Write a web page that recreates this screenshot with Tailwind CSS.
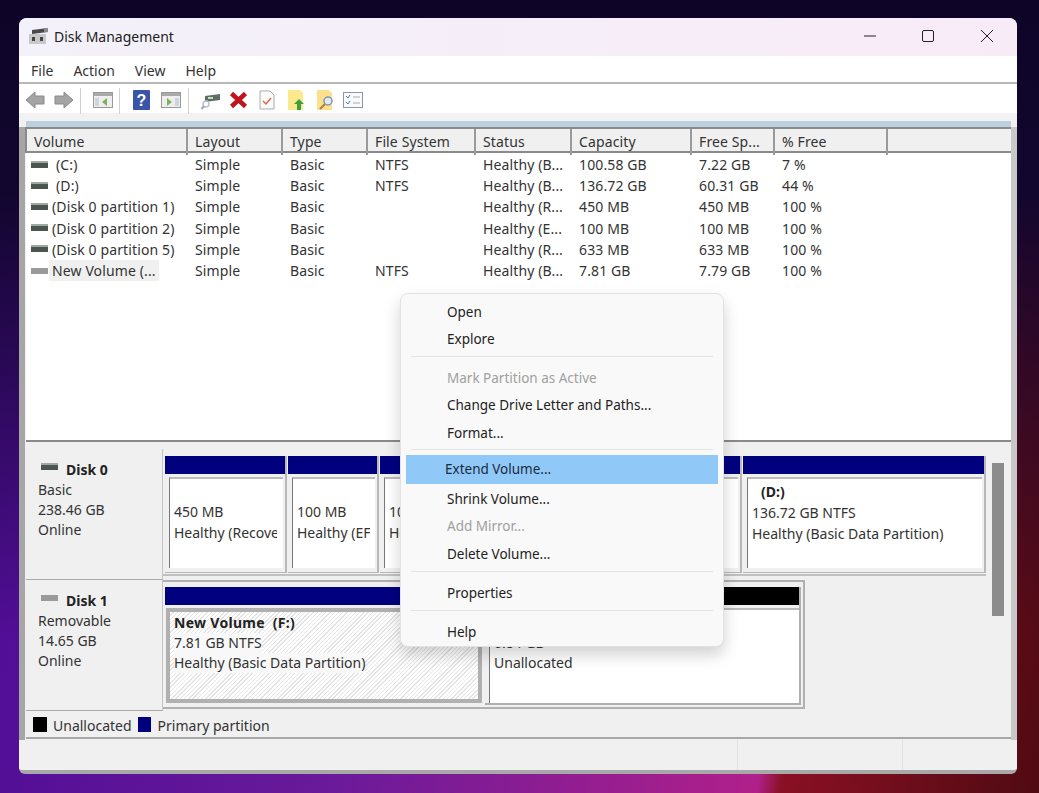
<!DOCTYPE html>
<html lang="en">
<head>
<meta charset="UTF-8">
<title>Disk Management</title>
<script src="https://cdn.jsdelivr.net/npm/@tailwindcss/browser@4"></script>
</head>
<body class="w-[1039px] h-[793px] overflow-hidden pt-[18px] pl-[19px] font-['Noto_Sans',sans-serif] text-[14px] text-[#333] bg-[linear-gradient(100deg,#4a0a96_0%,#6a1a9a_40%,#b0208a_76%,#8a1024_78%,#500a12_100%)]">
<div class="absolute inset-x-0 top-0 h-[640px] bg-[linear-gradient(180deg,#0e0428_0%,#12062e_30%,transparent_100%)]"></div>

<!-- Window -->
<div class="relative w-[998px] h-[756px] rounded-t-[8px] rounded-b-[6px] overflow-hidden bg-[#f0f0f0] border-b-[4px] border-[#a8a8a8] flex flex-col">

  <!-- Title bar -->
  <div class="h-[38px] shrink-0 flex items-center pb-[2px] bg-[linear-gradient(90deg,#f3f1f9,#f8ebf8)]">
    <svg class="ml-[10px] w-[20px] h-[18px]" viewBox="0 0 20 18">
      <path d="M3 3 L19 1 L19 5 L3 7 Z" fill="#4a4a4a"/>
      <rect x="15" y="1" width="4" height="4" fill="#8a8a8a"/>
      <rect x="0" y="7" width="17" height="10" fill="#c8c8c8"/>
      <rect x="3" y="10" width="3" height="4" fill="#444"/>
      <rect x="11" y="10" width="3" height="4" fill="#444"/>
    </svg>
    <span class="ml-[5px] text-[#222]">Disk Management</span>
    <div class="ml-auto flex items-center">
      <svg class="w-[14px] h-[14px] mr-[44px]" viewBox="0 0 14 14"><path d="M1 7 H13" stroke="#222" stroke-width="1"/></svg>
      <svg class="w-[14px] h-[14px] mr-[45px]" viewBox="0 0 14 14"><rect x="1.5" y="1.5" width="11" height="11" rx="1.5" fill="none" stroke="#222" stroke-width="1"/></svg>
      <svg class="w-[14px] h-[14px] mr-[23px]" viewBox="0 0 14 14"><path d="M1 1 L13 13 M13 1 L1 13" stroke="#222" stroke-width="1"/></svg>
    </div>
  </div>

  <!-- Menu bar -->
  <div class="h-[28px] shrink-0 bg-white border-b-[2px] border-[#b8b8b8] flex items-center pt-[2px] pl-[12px] gap-[20px] text-[#333]">
    <span>File</span><span>Action</span><span>View</span><span>Help</span>
  </div>

  <!-- Toolbar -->
  <div class="h-[37px] shrink-0 flex items-start pt-[6px] pl-[6px] bg-[linear-gradient(#fff_0,#fff_29px,#f2f2f2_29px)]">
    <svg class="w-[20px] h-[20px]" viewBox="0 0 20 20"><path d="M1 10 L10 2 V6 H19 V14 H10 V18 Z" fill="#a4a4a4" stroke="#8a8a8a"/></svg>
    <svg class="ml-[9px] w-[20px] h-[20px]" viewBox="0 0 20 20"><path d="M19 10 L10 2 V6 H1 V14 H10 V18 Z" fill="#a4a4a4" stroke="#8a8a8a"/></svg>
    <div class="ml-[6px] w-px h-[26px] -mt-[2px] bg-[#d0d0d0]"></div>
    <svg class="ml-[12px] mt-[1px] w-[20px] h-[18px]" viewBox="0 0 20 18"><rect x="0.5" y="1.5" width="19" height="15" fill="#eee" stroke="#999"/><rect x="1" y="2" width="18" height="3" fill="#aaa"/><rect x="2" y="7" width="4" height="8" fill="#cdd6dd"/><path d="M14 7 L9 11 L14 15 Z" fill="#7fb060"/></svg>
    <div class="ml-[6px] w-px h-[26px] -mt-[2px] bg-[#d0d0d0]"></div>
    <svg class="ml-[13px] w-[17px] h-[20px]" viewBox="0 0 17 20"><rect width="17" height="20" rx="1" fill="#3a55a8"/><text x="8.5" y="16" text-anchor="middle" font-size="16" font-weight="700" fill="#fff" font-family="Liberation Sans">?</text></svg>
    <svg class="ml-[11px] mt-[1px] w-[20px] h-[18px]" viewBox="0 0 20 18"><rect x="0.5" y="1.5" width="19" height="15" fill="#eee" stroke="#999"/><rect x="1" y="2" width="18" height="3" fill="#aaa"/><rect x="14" y="7" width="4" height="8" fill="#cdd6dd"/><path d="M6 7 L11 11 L6 15 Z" fill="#7fb060"/></svg>
    <div class="ml-[7px] w-px h-[26px] -mt-[2px] bg-[#d0d0d0]"></div>
    <svg class="ml-[12px] w-[20px] h-[20px]" viewBox="0 0 20 20"><path d="M4 6 L19 4 L19 10 L4 12 Z" fill="#5f6e66"/><rect x="7" y="7" width="5" height="2" fill="#bfe0c0"/><circle cx="5" cy="14" r="3" fill="none" stroke="#b8c4d0" stroke-width="1.5"/><path d="M3 16 L0.5 19" stroke="#9aa8b8" stroke-width="2"/></svg>
    <svg class="ml-[8px] mt-[1px] w-[19px] h-[18px]" viewBox="0 0 19 18"><path d="M2.5 2.5 L16.5 15.5 M16.5 2.5 L2.5 15.5" stroke="#c0141e" stroke-width="4.5"/></svg>
    <svg class="ml-[11px] w-[16px] h-[20px]" viewBox="0 0 16 20"><path d="M1 1 H11 L15 5 V19 H1 Z" fill="#fafafa" stroke="#aaa"/><path d="M4 11 L7 14 L12 8" stroke="#d8694a" stroke-width="1.5" fill="none"/></svg>
    <svg class="ml-[13px] w-[17px] h-[20px]" viewBox="0 0 17 20"><path d="M0 0 H12 L15 3 V20 H0 Z" fill="#fde98c"/><path d="M11 9 L16 14 H13 V20 H9 V14 H6 Z" fill="#3ca03c"/></svg>
    <svg class="ml-[12px] w-[18px] h-[20px]" viewBox="0 0 18 20"><path d="M0 0 H12 L15 3 V20 H0 Z" fill="#fde08c"/><circle cx="11" cy="11" r="4" fill="#dfeaf5" stroke="#7d97ad" stroke-width="1.5"/><path d="M8 14 L3 19" stroke="#a88040" stroke-width="2"/></svg>
    <svg class="ml-[8px] mt-[2px] w-[20px] h-[16px]" viewBox="0 0 20 16"><rect x="0.5" y="0.5" width="19" height="15" fill="#fafafa" stroke="#8a98a4"/><path d="M3 4 L5 6 L7 3 M3 10 L5 12 L7 9" stroke="#4a7ac0" fill="none"/><path d="M10 5 H17 M10 11 H17" stroke="#aaa"/></svg>
  </div>
  <div class="h-[6px] shrink-0 bg-[#bcd0e0] ml-[7px] mr-[6px]"></div>

  <!-- Client area -->
  <div class="flex-1 min-h-0 flex border-x-[6px] border-[#a6a6a6] border-r-[#c8c8c8] bg-[#f0f0f0]">
    <div class="flex-1 flex flex-col min-w-0 pl-px">

      <!-- Volume list -->
      <div class="h-[315px] shrink-0 flex flex-col border-b-[2px] border-[#8a8a8a] bg-white tracking-[0.12px]">
        <div class="h-[26px] shrink-0 grid grid-cols-[161px_95px_85px_108px_96px_120px_83px_113px] bg-[#f0f0f0] border-y-[2px] border-[#8a8a8a] border-l-[2px] border-l-[#8a8a8a] -ml-px leading-[26px]">
          <div class="h-full pl-[7px] border-r-[2px] border-[#9a9a9a]">Volume</div>
          <div class="h-full pl-[7px] border-r-[2px] border-[#9a9a9a]">Layout</div>
          <div class="h-full pl-[7px] border-r-[2px] border-[#9a9a9a]">Type</div>
          <div class="h-full pl-[7px] border-r-[2px] border-[#9a9a9a]">File System</div>
          <div class="h-full pl-[7px] border-r-[2px] border-[#9a9a9a]">Status</div>
          <div class="h-full pl-[7px] border-r-[2px] border-[#9a9a9a]">Capacity</div>
          <div class="h-full pl-[7px] border-r-[2px] border-[#9a9a9a]">Free Sp...</div>
          <div class="h-full pl-[7px] border-r-[2px] border-[#9a9a9a]">% Free</div>
        </div>
        <div class="pt-px leading-[21.2px] grid grid-cols-[161px_95px_85px_108px_96px_120px_83px_113px] auto-rows-[21.2px]">
          <div class="flex items-center pl-[5px]"><svg class="w-[17px] h-[8px] mr-[8px]" viewBox="0 0 17 8"><rect width="17" height="2" fill="#a0a8a4"/><rect y="2" width="17" height="5" fill="#4c5650"/></svg>(C:)</div>
          <div class="pl-[8px]">Simple</div><div class="pl-[8px]">Basic</div><div class="pl-[8px]">NTFS</div><div class="pl-[8px]">Healthy (B...</div><div class="pl-[8px]">100.58 GB</div><div class="pl-[8px]">7.22 GB</div><div class="pl-[8px]">7 %</div>
          <div class="flex items-center pl-[5px]"><svg class="w-[17px] h-[8px] mr-[8px]" viewBox="0 0 17 8"><rect width="17" height="2" fill="#a0a8a4"/><rect y="2" width="17" height="5" fill="#4c5650"/></svg>(D:)</div>
          <div class="pl-[8px]">Simple</div><div class="pl-[8px]">Basic</div><div class="pl-[8px]">NTFS</div><div class="pl-[8px]">Healthy (B...</div><div class="pl-[8px]">136.72 GB</div><div class="pl-[8px]">60.31 GB</div><div class="pl-[8px]">44 %</div>
          <div class="flex items-center pl-[5px]"><svg class="w-[17px] h-[8px] mr-[4px]" viewBox="0 0 17 8"><rect width="17" height="2" fill="#a0a8a4"/><rect y="2" width="17" height="5" fill="#4c5650"/></svg>(Disk 0 partition 1)</div>
          <div class="pl-[8px]">Simple</div><div class="pl-[8px]">Basic</div><div></div><div class="pl-[8px]">Healthy (R...</div><div class="pl-[8px]">450 MB</div><div class="pl-[8px]">450 MB</div><div class="pl-[8px]">100 %</div>
          <div class="flex items-center pl-[5px]"><svg class="w-[17px] h-[8px] mr-[4px]" viewBox="0 0 17 8"><rect width="17" height="2" fill="#a0a8a4"/><rect y="2" width="17" height="5" fill="#4c5650"/></svg>(Disk 0 partition 2)</div>
          <div class="pl-[8px]">Simple</div><div class="pl-[8px]">Basic</div><div></div><div class="pl-[8px]">Healthy (E...</div><div class="pl-[8px]">100 MB</div><div class="pl-[8px]">100 MB</div><div class="pl-[8px]">100 %</div>
          <div class="flex items-center pl-[5px]"><svg class="w-[17px] h-[8px] mr-[4px]" viewBox="0 0 17 8"><rect width="17" height="2" fill="#a0a8a4"/><rect y="2" width="17" height="5" fill="#4c5650"/></svg>(Disk 0 partition 5)</div>
          <div class="pl-[8px]">Simple</div><div class="pl-[8px]">Basic</div><div></div><div class="pl-[8px]">Healthy (R...</div><div class="pl-[8px]">633 MB</div><div class="pl-[8px]">633 MB</div><div class="pl-[8px]">100 %</div>
          <div class="flex items-center pl-[5px]"><svg class="w-[17px] h-[8px] mr-[1px]" viewBox="0 0 17 8"><rect y="1" width="17" height="6" fill="#9a9a9a"/></svg><span class="pl-[3px] w-[110px] bg-[#f0f0f0]">New Volume (...</span></div>
          <div class="pl-[8px]">Simple</div><div class="pl-[8px]">Basic</div><div class="pl-[8px]">NTFS</div><div class="pl-[8px]">Healthy (B...</div><div class="pl-[8px]">7.81 GB</div><div class="pl-[8px]">7.79 GB</div><div class="pl-[8px]">100 %</div>
        </div>
      </div>

      <!-- Graphical view -->
      <div class="flex-1 min-h-0 flex flex-col pt-[7px] leading-[20px]">
        <div class="flex h-[131px] shrink-0">
          <div class="w-[137px] shrink-0 bg-[#f0f0f0] border-r-[1px] border-[#c4c4c4] border-b-[1px] border-b-[#aaa] pl-[12px] pt-[10px]">
            <div class="h-[21px] flex items-center gap-[8px] font-bold text-[#222]"><svg class="ml-[3px] -mt-[5px] w-[17px] h-[8px]" viewBox="0 0 17 8"><rect width="17" height="2" fill="#a0a8a4"/><rect y="2" width="17" height="5" fill="#4c5650"/></svg>Disk 0</div>
            <div>Basic</div><div>238.46 GB</div><div>Online</div>
          </div>
          <div class="w-[823px] flex gap-px pl-[2px] pt-[7px] h-[127px] border-b-[2px] border-[#c0c0c0] leading-[21px]">
            <div class="w-[122px] flex flex-col border-r-[2px] border-b border-[#b8b8b8] h-[117px]">
              <div class="h-[18px] shrink-0 bg-[#00007f]"></div>
              <div class="mt-[3px] ml-[4px] mr-[2px] h-[91px] bg-white border-t-[2px] border-l border-t-[#bbb] border-l-[#777] pl-[4px] pt-[22px] whitespace-nowrap"><div class="w-[103px] overflow-hidden">450 MB<br>Healthy (Recove</div></div>
            </div>
            <div class="w-[91px] flex flex-col border-r-[2px] border-b border-[#b8b8b8] h-[117px]">
              <div class="h-[18px] shrink-0 bg-[#00007f]"></div>
              <div class="mt-[3px] ml-[4px] mr-[2px] h-[91px] bg-white border-t-[2px] border-l border-t-[#bbb] border-l-[#777] pl-[4px] pt-[22px] whitespace-nowrap"><div class="w-[73px] overflow-hidden">100 MB<br>Healthy (EF</div></div>
            </div>
            <div class="w-[362px] flex flex-col border-r-[2px] border-b border-[#b8b8b8] h-[117px]">
              <div class="h-[18px] shrink-0 bg-[#00007f]"></div>
              <div class="mt-[3px] ml-[4px] mr-[2px] h-[91px] bg-white border-t-[2px] border-l border-t-[#bbb] border-l-[#777] pl-[4px] pt-[22px] overflow-hidden whitespace-nowrap">100.58 GB NTFS<br>Healthy (Boot)</div>
            </div>
            <div class="w-[243px] flex flex-col border-r-[2px] border-b border-[#b8b8b8] h-[117px]">
              <div class="h-[18px] shrink-0 bg-[#00007f]"></div>
              <div class="mt-[3px] ml-[4px] mr-[2px] h-[91px] bg-white border-t-[2px] border-l border-t-[#bbb] border-l-[#777] pl-[4px] pt-[2px] overflow-hidden whitespace-nowrap"><div class="font-bold pl-[9px] text-[#222]">(D:)</div>136.72 GB NTFS<br>Healthy (Basic Data Partition)</div>
            </div>
          </div>
          <div class="ml-[6px] mt-[14px] w-[12px] h-[153px] bg-[#8c8c8c]"></div>
        </div>

        <div class="flex h-[131px] shrink-0">
          <div class="w-[137px] shrink-0 bg-[#f0f0f0] border-r-[1px] border-[#c4c4c4] border-b-[1px] border-b-[#aaa] pl-[12px] pt-[10px]">
            <div class="h-[21px] flex items-center gap-[8px] font-bold text-[#222]"><svg class="ml-[3px] -mt-[5px] w-[17px] h-[8px]" viewBox="0 0 17 8"><rect y="1" width="17" height="6" fill="#9a9a9a"/></svg>Disk 1</div>
            <div>Removable</div><div>14.65 GB</div><div>Online</div>
          </div>
          <div class="w-[642px] flex gap-[3px] pl-[2px] pt-[5px] h-[129px] border-r-[2px] border-t-[2px] border-b-[2px] border-[#b0b0b0]">
            <div class="w-[317px] flex flex-col">
              <div class="h-[18px] shrink-0 bg-[#00007f]"></div>
              <div class="mt-[3px] ml-px h-[95px] border-[4px] border-[#b0b0b0] pl-[4px] pt-px overflow-hidden whitespace-nowrap bg-[repeating-linear-gradient(135deg,#fff_0,#fff_2px,#e4e4e4_2px,#e4e4e4_3px)]">
                <div class="flex flex-col items-start"><span class="font-bold tracking-[0.3px] text-[#222]">New Volume&nbsp;&nbsp;(F:)</span><span class="bg-[#f8f8f8]">7.81 GB NTFS</span><span class="bg-[#f8f8f8]">Healthy (Basic Data Partition)</span></div>
              </div>
            </div>
            <div class="w-[316px] h-[118px] flex flex-col border-r-[2px] border-b-[2px] border-[#b0b0b0]">
              <div class="h-[18px] shrink-0 bg-black"></div>
              <div class="mt-[3px] ml-[4px] h-[95px] bg-white border-t-[2px] border-l border-t-[#bbb] border-l-[#777] pl-[4px] pt-[23px] whitespace-nowrap">6.84 GB<br>Unallocated</div>
            </div>
          </div>
        </div>

        <!-- Legend -->
        <div class="h-[27px] mt-px shrink-0 flex items-center border-b-[2px] border-[#a8a8a8] pl-[7px] pt-[3px]">
          <span class="w-[14px] h-[15px] -mt-[3px] bg-black mr-[6px]"></span><span>Unallocated</span>
          <span class="ml-[6px] w-[13px] h-[15px] -mt-[3px] bg-[#00007f] mr-[7px]"></span><span>Primary partition</span>
        </div>
      </div>
    </div>
  </div>

  <!-- Status bar -->
  <div class="h-[30px] shrink-0 bg-[#f0f0f0] flex justify-end">
    <div class="w-[165px] border-l border-[#e2e2e2]"></div>
    <div class="w-[115px] border-l border-[#e2e2e2]"></div>
  </div>

  <!-- Context menu -->
  <div class="absolute left-[381px] top-[275px] w-[324px] h-[354px] rounded-[8px] bg-[#f9f9f9] border border-[#e2e2e2] shadow-[0_8px_16px_rgba(0,0,0,0.18)] text-[13.5px] text-[#222] leading-[27.4px] pt-[5px]">
    <div class="pl-[46px]">Open</div>
    <div class="pl-[46px]">Explore</div>
    <div class="mx-[10px] h-px bg-[#e4e4e4] mt-[2px] mb-[8px]"></div>
    <div class="pl-[46px] text-[#a0a0a0]">Mark Partition as Active</div>
    <div class="pl-[46px]">Change Drive Letter and Paths...</div>
    <div class="pl-[46px]">Format...</div>
    <div class="mx-[10px] h-px bg-[#e4e4e4] mt-[2px] mb-[5px]"></div>
    <div class="mx-[5px] h-[29px] pl-[39px] bg-[#90c8f8] text-[#1a2a40] leading-[29px]">Extend Volume...</div>
    <div class="pl-[46px] mt-[2px]">Shrink Volume...</div>
    <div class="pl-[46px] text-[#a0a0a0]">Add Mirror...</div>
    <div class="pl-[46px]">Delete Volume...</div>
    <div class="mx-[10px] h-px bg-[#e4e4e4] mt-[3px] mb-[8px]"></div>
    <div class="pl-[46px]">Properties</div>
    <div class="mx-[10px] h-px bg-[#e4e4e4] mt-[2px] mb-[8px]"></div>
    <div class="pl-[46px]">Help</div>
  </div>
</div>
</body>
</html>
